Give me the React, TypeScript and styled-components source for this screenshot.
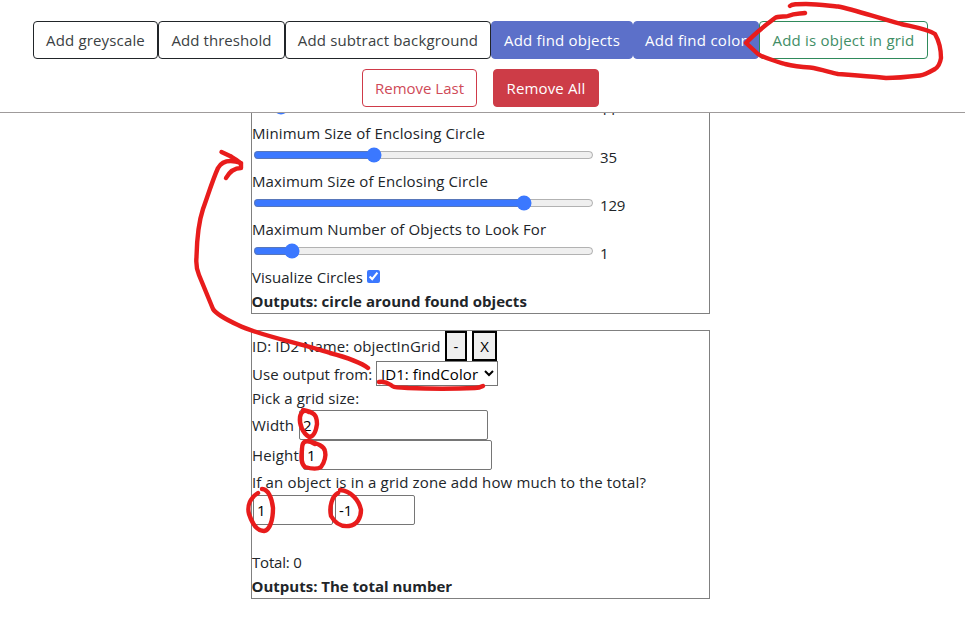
import React from 'react';
import styled, { createGlobalStyle } from 'styled-components';

const GlobalStyle = createGlobalStyle`
  *, *::before, *::after { box-sizing: border-box; }
  html, body { margin: 0; padding: 0; background: #fff; }
  body, button, input, select {
    font-family: "Open Sans", "Noto Sans", sans-serif;
    font-size: 15px;
    line-height: 24px;
  }
  body { color: #212529; overflow: hidden; }
`;

const Page = styled.div`
  position: relative;
  display: flex;
  flex-direction: column;
  width: 965px;
  height: 627px;
  overflow: hidden;
`;

const Toolbar = styled.header`
  flex: none;
  display: flex;
  flex-direction: column;
  gap: 10px;
  height: 113px;
  padding-top: 21px;
  background: #fff;
  border-bottom: 1px solid #9f9b9b;
`;

const ButtonRow = styled.div<{ $gap?: number; $indent: number }>`
  display: flex;
  gap: ${(p) => p.$gap ?? 0}px;
  padding-left: ${(p) => p.$indent}px;
`;

const variants = {
  dark: { bg: '#fff', border: '#212529', color: '#3b3f43' },
  indigo: { bg: '#5c70c9', border: '#5c70c9', color: '#fff' },
  green: { bg: '#fff', border: '#2f8a5b', color: '#3f8e66' },
  redOutline: { bg: '#fff', border: '#cf3a49', color: '#cf4a58' },
  red: { bg: '#cd3c47', border: '#cd3c47', color: '#fff' },
};

const ActionButton = styled.button<{ $variant: keyof typeof variants; $width: number; $tracking?: number }>`
  flex: none;
  width: ${(p) => p.$width}px;
  height: 38px;
  padding: 0;
  border: 1px solid ${(p) => variants[p.$variant].border};
  border-radius: 4px;
  background: ${(p) => variants[p.$variant].bg};
  color: ${(p) => variants[p.$variant].color};
  letter-spacing: ${(p) => p.$tracking ?? 0.15}px;
  white-space: nowrap;
`;

const Pipeline = styled.main`
  flex: 1;
  min-height: 0;
  display: flex;
  flex-direction: column;
  justify-content: flex-end;
  align-items: flex-start;
  gap: 16px;
  padding: 0 0 28px 251px;
  overflow: hidden;
`;

const Card = styled.section`
  flex: none;
  width: 459px;
  border: 1px solid #808080;
`;

const Line = styled.div<{ $height?: number; $align?: string }>`
  display: flex;
  align-items: ${(p) => p.$align ?? 'center'};
  height: ${(p) => p.$height ?? 24}px;
  white-space: nowrap;
`;

const Text = styled.span<{ $tracking?: number; $width?: number }>`
  flex: none;
  width: ${(p) => (p.$width ? `${p.$width}px` : 'auto')};
  letter-spacing: ${(p) => p.$tracking ?? 0}px;
`;

const Outputs = styled(Text)`
  font-weight: 700;
  margin-left: -0.5px;
`;

const Range = styled.input`
  width: 341px;
  height: 16px;
  margin: 0 6px 4px 1px;
  accent-color: #3b78ff;
`;

const Check = styled.input`
  width: 13px;
  height: 13px;
  margin: 0 0 2px;
  accent-color: #3b78ff;
`;

const CardButton = styled.button<{ $width: number }>`
  width: ${(p) => p.$width}px;
  height: 30px;
  margin-right: 5px;
  padding: 0;
  border: 2px solid #000;
  background: #efefef;
  color: #000;
`;

const SourceSelect = styled.select`
  width: 122px;
  height: 25px;
  padding: 0;
  border: 1px solid #767676;
  border-radius: 0;
  background: #fff;
  color: #000;
  letter-spacing: 0.07px;
`;

const NumberField = styled.input<{ $width: number; $inset?: number }>`
  width: ${(p) => p.$width}px;
  height: 30px;
  margin: 0;
  padding: 1px 2px 1px ${(p) => p.$inset ?? 2}px;
  border: 1px solid #767676;
  border-radius: 2px;
  color: #000;
`;

const ZoneFields = styled.div`
  display: flex;
  gap: 2px;
  height: 56px;
  padding: 1px 0 0 1px;
`;

const Ink = styled.svg`
  position: absolute;
  inset: 0;
  pointer-events: none;
  fill: none;
  stroke: #e81c1c;
  stroke-width: 4.4;
  stroke-linecap: round;
  stroke-linejoin: round;
`;

function Slider({ label, tracking, value, max }: { label: string; tracking: number; value: number; max: number }) {
  return (
    <>
      <Line><Text $tracking={tracking}>{label}</Text></Line>
      <Line>
        <Range type="range" min={0} max={max} step="any" defaultValue={value} />
        <Text $tracking={-0.2}>{value}</Text>
      </Line>
    </>
  );
}

export default function App() {
  return (
    <>
      <GlobalStyle />
      <Page>
        <Toolbar>
          <ButtonRow $indent={33}>
            <ActionButton $variant="dark" $width={125}>Add greyscale</ActionButton>
            <ActionButton $variant="dark" $width={127} $tracking={0.07}>Add threshold</ActionButton>
            <ActionButton $variant="dark" $width={206}>Add subtract background</ActionButton>
            <ActionButton $variant="indigo" $width={142} $tracking={0.19}>Add find objects</ActionButton>
            <ActionButton $variant="indigo" $width={126} $tracking={0.28}>Add find color</ActionButton>
            <ActionButton $variant="green" $width={169} $tracking={0.21}>Add is object in grid</ActionButton>
          </ButtonRow>
          <ButtonRow $indent={362} $gap={16}>
            <ActionButton $variant="redOutline" $width={115} $tracking={0}>Remove Last</ActionButton>
            <ActionButton $variant="red" $width={106}>Remove All</ActionButton>
          </ButtonRow>
        </Toolbar>

        <Pipeline>
          <Card>
            <Line>
              <Range type="range" min={0} max={179} step="any" defaultValue={11} />
              <Text>11</Text>
            </Line>
            <Slider label="Minimum Size of Enclosing Circle" tracking={0.13} value={35} max={100.6} />
            <Slider label="Maximum Size of Enclosing Circle" tracking={0.12} value={129} max={159.5} />
            <Slider label="Maximum Number of Objects to Look For" tracking={0.12} value={1} max={10.5} />
            <Line>
              <Text $width={115} $tracking={0.04}>Visualize Circles</Text>
              <Check type="checkbox" defaultChecked />
            </Line>
            <Line><Outputs $tracking={0.03}>Outputs: circle around found objects</Outputs></Line>
          </Card>

          <Card>
            <Line $height={30}>
              <Text $width={193} $tracking={0.07}>ID: ID2 Name: objectInGrid</Text>
              <CardButton $width={22}>-</CardButton>
              <CardButton $width={25}>X</CardButton>
            </Line>
            <Line $height={25} $align="flex-end">
              <Text $width={124} $tracking={0.03}>Use output from:</Text>
              <SourceSelect defaultValue="ID1">
                <option value="ID1">ID1: findColor</option>
              </SourceSelect>
            </Line>
            <Line><Text $tracking={0.1}>Pick a grid size:</Text></Line>
            <Line $height={30}>
              <Text $width={47} $tracking={0.13}>Width</Text>
              <NumberField $width={189} $inset={3} defaultValue="2" />
            </Line>
            <Line $height={30}>
              <Text $width={51} $tracking={0.17}>Height</Text>
              <NumberField $width={189} $inset={3} defaultValue="1" />
            </Line>
            <Line><Text $tracking={0.155}>If an object is in a grid zone add how much to the total?</Text></Line>
            <ZoneFields>
              <NumberField $width={80} $inset={3} defaultValue="1" />
              <NumberField $width={80} $inset={3} defaultValue="-1" />
            </ZoneFields>
            <Line><Text $tracking={-0.2}>Total: 0</Text></Line>
            <Line><Outputs $tracking={0}>Outputs: The total number</Outputs></Line>
          </Card>
        </Pipeline>

        <Ink width="965" height="627" viewBox="0 0 965 627">
          <path d="M790 6 C792 4 797 4 806 4 C818 4 831 6 838 6.500 C855 10 875 17 901 24 C914 27 927 29 935 34 C939 41 941 48 941 58 C940 64 938 67 935 69 C928 73 924 75 920 75.500 C907 77 896 78 886 78 C867 76 852 75 838 74 C829 72 820 69 810 67.500 C801 67 793 66 785 64 C775 61 764 58 758 54 L746 43 C755 33 767 24 775 18 C778 16 785 17 788 16 C795 13 800 14 805 13" />
          <path d="M368 368 C359 361 345 357 330 353 C300 343 260 336 238 325 C225 319 216 314 213 309 L199 275 C196 268 196 262 196.500 257 C197 235 199 221 203 209 C208 195 213 179 218 168 C222 161 229 159 241 163" />
          <path d="M221.500 152 L230 156 C235 159 239 161 241 164 C241 166 241 167 241 168 C235 168 230 171 226 178" />
          <path d="M379 382 C384 381 388 383 391 385 C394 389 401 387 408 388 C430 389 455 389 475 388 C479 388 481 387 483 386" />
          <path d="M309 412 C304 409 301 412 300 417 C299 425 303 433 309 437 C314 437 316 431 317 424 C317 415 314 412 303 410" />
          <path d="M315 444 C306 439 302 441 302 449 C301 458 301 464 305 467 C312 469 318 469 321 467 C325 462 326 455 325 451 C324 446 318 444 309 441" />
          <path d="M258 493 C250 498 247 506 249 514 C252 523 257 531 264 531 C270 530 273 520 273 508 C272 498 268 489 262 489" />
          <path d="M338 493 C332 496 329 507 331 516 C335 523 341 527 349 526 C357 525 361 518 361 510 C359 500 351 491 340 490" />
        </Ink>
      </Page>
    </>
  );
}
